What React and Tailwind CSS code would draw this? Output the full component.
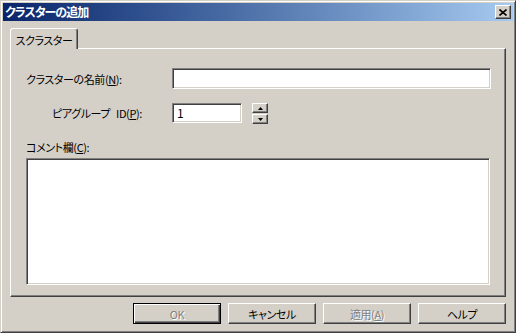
import React from 'react'

const raised =
  'bg-[#d4d0c8] border border-t-white border-l-white border-r-[#404040] border-b-[#404040] shadow-[inset_-1px_-1px_#808080]'
const sunken =
  'bg-white border border-t-[#808080] border-l-[#808080] border-r-white border-b-white shadow-[inset_1px_1px_#404040,inset_-1px_-1px_#d4d0c8]'

function Button({ children, disabled, isDefault }) {
  const frame = isDefault
    ? 'bg-[#d4d0c8] border border-black shadow-[inset_1px_1px_white,inset_-1px_-1px_#404040,inset_-2px_-2px_#808080]'
    : raised
  return (
    <div
      className={`${frame} w-[88px] h-[21px] flex items-center justify-center ${
        disabled ? 'text-[#808080] [text-shadow:1px_1px_white]' : 'text-black'
      }`}
    >
      {children}
    </div>
  )
}

function SpinArrow({ up }) {
  return (
    <svg width="5" height="3" viewBox="0 0 5 3">
      {up ? <path d="M2.5 0L5 3H0z" fill="black" /> : <path d="M0 0H5L2.5 3z" fill="black" />}
    </svg>
  )
}

export default function App() {
  return (
    <div className="w-[516px] h-[333px] bg-[#d4d0c8] border border-t-[#d4d0c8] border-l-[#d4d0c8] border-r-[#404040] border-b-[#404040] shadow-[inset_1px_1px_white,inset_-1px_-1px_#808080] p-[2px] flex flex-col font-['Noto_Sans_CJK_JP',sans-serif] [font-feature-settings:'palt'] text-[11px] leading-[14px] tracking-[-0.4px] text-black select-none">
      {/* title bar */}
      <div className="h-[18px] flex items-center justify-between bg-gradient-to-r from-[#0a246a] to-[#a6caf0] pl-[2px] pr-[2px]">
        <span className="text-white font-bold text-[12px] tracking-[-1px]">クラスターの追加</span>
        <div className={`${raised} w-[16px] h-[14px] flex items-center justify-center`}>
          <svg width="8" height="7" viewBox="0 0 8 7">
            <path d="M0.5 0.5L7.5 6.5M7.5 0.5L0.5 6.5" stroke="black" strokeWidth="1.6" />
          </svg>
        </div>
      </div>

      <div className="flex flex-col px-[7px]">
        {/* tab strip */}
        <div className="flex mt-[7px]">
          <div className="relative z-10 -mb-px w-[68px] h-[21px] bg-[#d4d0c8] border-t border-l border-r border-t-white border-l-white border-r-[#404040] shadow-[inset_-1px_0_#808080] rounded-t-[3px] flex items-start justify-center pt-[4px]">
            スクラスター
          </div>
        </div>

        {/* tab panel */}
        <div className="h-[249px] border border-t-white border-l-white border-r-[#404040] border-b-[#404040] shadow-[inset_-1px_-1px_#808080] pt-[19px] pl-[15px] flex flex-col">
          <div className="flex items-center h-[21px]">
            <span className="w-[146px]">
              クラスターの名前(<span className="underline">N</span>):
            </span>
            <div className={`${sunken} w-[319px] h-[21px]`} />
          </div>

          <div className="flex items-start mt-[14px]">
            <span className="w-[146px] h-[20px] flex items-center pl-[26px]">
              ピアグループ<span className="ml-[6px]">ID(<span className="underline">P</span>):</span>
            </span>
            <div className={`${sunken} w-[70px] h-[20px] flex items-center pl-[4px] text-[12px]`}>1</div>
            <div className="ml-[10px] flex flex-col gap-px">
              <div className={`${raised} w-[16px] h-[10px] flex items-center justify-center`}>
                <SpinArrow up />
              </div>
              <div className={`${raised} w-[16px] h-[10px] flex items-center justify-center`}>
                <SpinArrow />
              </div>
            </div>
          </div>

          <span className="mt-[16px]">
            コメント欄(<span className="underline">C</span>):
          </span>
          <div className={`${sunken} mt-[4px] w-[464px] h-[127px]`} />
        </div>

        {/* buttons */}
        <div className="flex justify-end gap-[7px] mt-[6px]">
          <Button isDefault disabled>OK</Button>
          <Button>キャンセル</Button>
          <Button disabled>
            適用(<span className="underline">A</span>)
          </Button>
          <Button>ヘルプ</Button>
        </div>
      </div>
    </div>
  )
}
